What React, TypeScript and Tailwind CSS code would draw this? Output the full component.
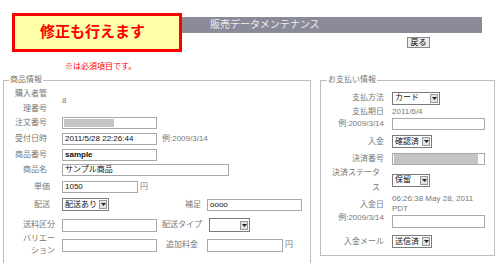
import React from "react";

const Label = ({ className = "", children }: { className?: string; children: React.ReactNode }) => (
  <div className={`shrink-0 text-right text-[8px] text-[#777] ${className}`}>{children}</div>
);

const Input = ({ className = "", children }: { className?: string; children?: React.ReactNode }) => (
  <div
    className={`flex shrink-0 items-center overflow-hidden border border-[#a8a8a8] bg-white px-[2px] text-[8px] leading-none whitespace-nowrap text-[#111] ${className}`}
  >
    {children}
  </div>
);

const Select = ({ className = "", children }: { className?: string; children?: React.ReactNode }) => (
  <div
    className={`flex shrink-0 items-center justify-between border border-[#7b7b7b] bg-white pr-[1px] pl-[2px] text-[8px] leading-none whitespace-nowrap text-[#111] ${className}`}
  >
    <span>{children}</span>
    <span className="flex h-[9px] w-[8px] items-center justify-center border border-[#9a9a9a] bg-[#e2e2e2]">
      <svg width="5" height="3" viewBox="0 0 5 3">
        <path d="M0 0h5L2.5 3z" fill="#222" />
      </svg>
    </span>
  </div>
);

export default function App() {
  return (
    <div className="relative h-[263px] w-[500px] overflow-hidden bg-white font-['Liberation_Sans','Noto_Sans_CJK_JP',sans-serif]">
      <div className="flex flex-col">
        <div className="mt-[17px] ml-[12px] flex h-[16px] w-[470px] items-center bg-[#8b8a99] pl-[198px] text-[10px] leading-none text-[#eeeeee]">
          販売データメンテナンス
        </div>
        <button className="mt-[4px] ml-[407px] flex h-[11px] w-[23px] items-center justify-center border border-[#8a8a8a] bg-[#ececec] text-[8px] leading-none text-black">
          戻る
        </button>
        <div className="mt-[13px] ml-[65px] text-[8px] leading-[12px] text-[#ff0000]">※は必須項目です。</div>

        <div className="mt-[1px] flex items-start">
          {/* 商品情報 */}
          <fieldset className="ml-[3px] w-[308px] shrink-0 border border-[#bdbdbd] pb-[20px]">
            <legend className="ml-[5px] px-[1px] text-[8px] leading-[12px] text-[#777]">商品情報</legend>

            <div className="flex h-[30px] items-center">
              <Label className="w-[43px] leading-[15px]">
                購入者管
                <br />
                理番号
              </Label>
              <div className="ml-[15px] text-[8px] leading-none text-[#777]">8</div>
            </div>

            <div className="mt-[1px] flex h-[12px] items-center">
              <Label className="w-[43px] leading-[12px]">注文番号</Label>
              <Input className="ml-[15px] h-[12px] w-[95px] !px-[1px]">
                <div className="h-[8px] w-[50px] bg-[#c4c4c4]" />
              </Input>
            </div>

            <div className="mt-[4px] flex h-[12px] items-center">
              <Label className="w-[43px] leading-[12px]">受付日時</Label>
              <Input className="ml-[15px] h-[12px] w-[95px]">2011/5/28 22:26:44</Input>
              <span className="ml-[5px] text-[8px] leading-none text-[#777]">例:2009/3/14</span>
            </div>

            <div className="mt-[4px] flex h-[12px] items-center">
              <Label className="w-[43px] leading-[12px]">商品番号</Label>
              <Input className="ml-[15px] h-[12px] w-[95px] font-bold">sample</Input>
            </div>

            <div className="mt-[3px] flex h-[12px] items-center">
              <Label className="w-[43px] leading-[12px]">商品名</Label>
              <Input className="ml-[15px] h-[12px] w-[167px]">サンプル商品</Input>
            </div>

            <div className="mt-[5px] flex h-[12px] items-center">
              <Label className="w-[46px] leading-[12px]">単価</Label>
              <Input className="ml-[12px] h-[12px] w-[76px]">1050</Input>
              <span className="ml-[2px] text-[8px] leading-none text-[#777]">円</span>
            </div>

            <div className="mt-[5px] flex h-[13px] items-center">
              <Label className="w-[46px] leading-[12px]">配送</Label>
              <Select className="ml-[12px] h-[13px] w-[47px]">配送あり</Select>
              <Label className="w-[92px] leading-[12px]">補足</Label>
              <Input className="ml-[6px] h-[12px] w-[95px]">oooo</Input>
            </div>

            <div className="mt-[7px] flex h-[14px] items-center">
              <Label className="w-[51px] leading-[12px]">送料区分</Label>
              <Input className="ml-[7px] h-[13px] w-[95px]" />
              <Label className="w-[45px] leading-[12px]">配送タイプ</Label>
              <Select className="ml-[7px] h-[14px] w-[41px]" />
            </div>

            <div className="mt-[1px] flex h-[24px] items-center">
              <Label className="w-[51px] leading-[12px]">
                バリエー
                <br />
                ション
              </Label>
              <Input className="ml-[7px] h-[13px] w-[95px]" />
              <Label className="w-[41px] leading-[12px]">追加料金</Label>
              <Input className="ml-[9px] h-[13px] w-[76px]" />
              <span className="ml-[2px] text-[8px] leading-none text-[#777]">円</span>
            </div>
          </fieldset>

          {/* お支払い情報 */}
          <fieldset className="ml-[9px] w-[175px] shrink-0 border border-[#bdbdbd] pb-[7px]">
            <legend className="ml-[6px] px-[1px] text-[8px] leading-[12px] text-[#777]">お支払い情報</legend>

            <div className="mt-[5px] flex h-[14px] items-center">
              <Label className="w-[63px] leading-[12px]">支払方法</Label>
              <Select className="ml-[8px] h-[13px] w-[48px]">カード</Select>
            </div>

            <div className="mt-[1px] flex items-center">
              <Label className="w-[63px] leading-[12px]">
                支払期日
                <br />
                例:2009/3/14
              </Label>
              <div className="ml-[8px] flex flex-col">
                <div className="text-[8px] leading-[12px] text-[#777]">2011/6/4</div>
                <Input className="h-[12px] w-[93px]" />
              </div>
            </div>

            <div className="mt-[5px] flex h-[13px] items-center">
              <Label className="w-[63px] leading-[12px]">入金</Label>
              <Select className="ml-[8px] h-[13px] w-[40px]">確認済</Select>
            </div>

            <div className="mt-[5px] flex h-[12px] items-center">
              <Label className="w-[63px] leading-[12px]">決済番号</Label>
              <Input className="ml-[8px] h-[12px] w-[93px] !px-[1px]">
                <div className="h-full w-[84px] bg-[#c4c4c4]" />
              </Input>
            </div>

            <div className="mt-[1px] flex h-[28px] items-center">
              <Label className="w-[63px] pr-[4px] leading-[15px]">
                決済ステータ
                <br />
                ス
              </Label>
              <Select className="ml-[8px] h-[13px] w-[38px]">保留</Select>
            </div>

            <div className="flex items-center">
              <Label className="w-[63px] leading-[13px]">
                入金日
                <br />
                例:2009/3/14
              </Label>
              <div className="ml-[8px] flex flex-col">
                <div className="text-[8px] leading-[10px] text-[#777]">
                  06:26:38 May 28, 2011
                  <br />
                  PDT
                </div>
                <Input className="mt-[1px] h-[13px] w-[93px]" />
              </div>
            </div>

            <div className="mt-[7px] flex h-[13px] items-center">
              <Label className="w-[63px] leading-[12px]">入金メール</Label>
              <Select className="ml-[8px] h-[13px] w-[40px]">送信済</Select>
            </div>
          </fieldset>
        </div>
      </div>

      <div className="absolute top-[13px] left-[12px] flex h-[39px] w-[170px] items-center border-[3px] border-[#ff0000] bg-[#ffffaa] pb-[3px] pl-[25px] text-[15px] leading-none font-bold text-[#ff0000]">
        修正も行えます
      </div>
    </div>
  );
}
